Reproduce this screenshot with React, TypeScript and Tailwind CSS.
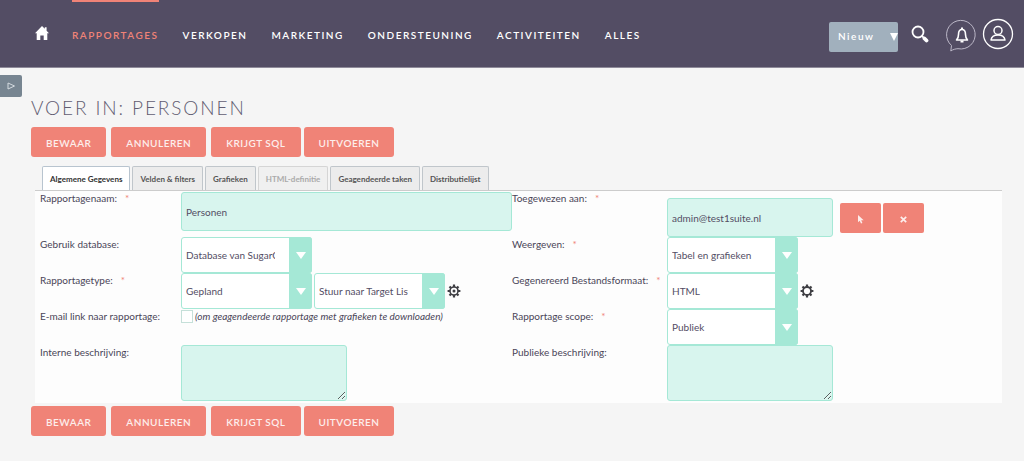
import React, { useState } from 'react';

const NAV_ITEMS = ['Rapportages', 'Verkopen', 'Marketing', 'Ondersteuning', 'Activiteiten', 'Alles'];

const TABS = [
  { label: 'Algemene Gegevens' },
  { label: 'Velden & filters' },
  { label: 'Grafieken' },
  { label: 'HTML-definitie', disabled: true },
  { label: 'Geagendeerde taken' },
  { label: 'Distributielijst' },
];

const fieldClass =
  'block rounded-[3px] border border-[#a5e8d6] bg-[#d8f5ee] px-1 text-[10px] text-[#534d64] outline-none';

const HomeIcon = () => (
  <svg viewBox="0 0 14 14" className="h-[14px] w-[14px]" fill="white">
    <path d="M7 0 0 7.200h1.700V14h3.600V9.600h3.400V14h3.600V7.200H14L11.600 4.700V1.200H9.800v1.600z" />
  </svg>
);

const SearchIcon = () => (
  <svg viewBox="0 0 18 18" className="h-[18px] w-[18px]" fill="none" stroke="white">
    <circle cx="7" cy="7" r="5.500" strokeWidth="1.800" />
    <path d="m11 11 1.600 1.600" strokeWidth="1.800" />
    <path d="m13.500 13.500 2 2" strokeWidth="3.800" strokeLinecap="round" />
  </svg>
);

const BellIcon = () => (
  <svg viewBox="0 0 32 36" className="h-[36px] w-[32px]" fill="none" stroke="white">
    <path d="M5.500 27.500A14.300 14.300 0 1 1 12 30.700c-2.500.1-4.900.7-7.200 2.300z" strokeWidth="1" stroke="#bcb8c8" />
    <path d="M10.500 22c1.700-1.600 2-3.300 2-5.500 0-3.400 1.300-5 3.500-5s3.500 1.600 3.500 5c0 2.200.3 3.900 2 5.500z" strokeWidth="1.600" strokeLinejoin="round" />
    <path d="M16 9.500v2M14.500 23.500h3" strokeWidth="2" />
  </svg>
);

const UserIcon = () => (
  <svg viewBox="0 0 32 32" className="h-[32px] w-[32px]" fill="none" stroke="white">
    <circle cx="16" cy="16" r="14.500" strokeWidth="1.300" />
    <circle cx="16" cy="12.500" r="4" strokeWidth="1.500" />
    <path d="M9 22c.5-3.500 2.800-5 7-5s6.500 1.500 7 5z" strokeWidth="1.500" strokeLinejoin="round" />
  </svg>
);

const GearIcon = ({ dot = false }: { dot?: boolean }) => (
  <svg viewBox="-7 -7 14 14" className="h-[14px] w-[14px]" fill="none" stroke="#3f3f44">
    <circle r="4" strokeWidth={dot ? 1.6 : 1.8} />
    <path
      d="M0-6.400v2.400M0 6.400v-2.400M-6.400 0h2.400M6.400 0h-2.400M-4.500-4.500l1.500 1.500M4.500 4.500 3 3M4.500-4.500 3-3M-4.500 4.500-3 3"
      strokeWidth="2.200"
    />
    {dot && <circle r="1.500" fill="#3f3f44" stroke="none" />}
  </svg>
);

const ActionButton: React.FC<{ children: React.ReactNode }> = ({ children }) => (
  <button
    type="button"
    className="h-[30px] rounded-[3px] bg-[#f08377] px-[15px] pt-[2px] text-[10px] font-semibold tracking-wider text-[#fdeeec] uppercase"
  >
    {children}
  </button>
);

const ActionButtons = () => (
  <div className="flex flex-wrap gap-[3px]">
    <div className="flex gap-[5px]">
      <ActionButton>Bewaar</ActionButton>
      <ActionButton>Annuleren</ActionButton>
      <ActionButton>Krijgt SQL</ActionButton>
    </div>
    <ActionButton>Uitvoeren</ActionButton>
  </div>
);

interface SelectFieldProps {
  id: string;
  value: string;
  label?: string;
}

const SelectField: React.FC<SelectFieldProps> = ({ id, value, label }) => (
  <div className="relative w-[131px]">
    <select
      id={id}
      aria-label={label}
      className="block h-[36px] w-full appearance-none overflow-hidden rounded-[3px] border border-[#a5e8d6] bg-white pr-[36px] pl-1 text-[10px] text-[#534d64] outline-none"
    >
      <option>{value}</option>
    </select>
    <span className="pointer-events-none absolute inset-y-0 right-0 flex w-[23px] items-center justify-center rounded-r-[3px] bg-[#a5e8d6]">
      <svg viewBox="0 0 10 7" className="h-[7px] w-[10px]" fill="white">
        <path d="M0 0h10L5 7z" />
      </svg>
    </span>
  </div>
);

interface FieldLabelProps {
  htmlFor: string;
  required?: boolean;
  children: React.ReactNode;
}

const FieldLabel: React.FC<FieldLabelProps> = ({ htmlFor, required, children }) => (
  <label htmlFor={htmlFor} className="block text-[10px] leading-[14px] text-[#4a4558]">
    {children}
    {required && <span className="ml-2 text-[#f08377]">*</span>}
  </label>
);

const App: React.FC = () => {
  const [activeTab, setActiveTab] = useState(0);
  const [name, setName] = useState('Personen');
  const [assigned, setAssigned] = useState('admin@test1suite.nl');

  return (
    <div className="min-h-screen bg-[#f5f5f5] font-['Lato',sans-serif]">
      {/* Top navigation */}
      <header className="flex h-[68px] items-center border-b border-[#8f8b9a] bg-[#534d64] pr-[10px] pl-[35px]">
        <a href="#" aria-label="Home" className="mr-[23px] pb-[2px]">
          <HomeIcon />
        </a>
        <nav className="flex h-full gap-6">
          {NAV_ITEMS.map((item, index) => (
            <a
              key={item}
              href="#"
              className={`flex h-full items-center border-t-2 pt-px text-[10px] font-semibold tracking-[0.15em] uppercase ${
                index === 0 ? 'border-[#f08377] text-[#f08377]' : 'border-transparent text-white'
              }`}
            >
              {item}
            </a>
          ))}
        </nav>
        <div className="ml-auto flex items-center">
          <button
            type="button"
            className="mt-[6px] flex h-[30px] w-[69px] items-center justify-between rounded-[2px] bg-[#a1b0bd] pl-[9px] text-[10px] font-semibold tracking-[0.15em] text-white"
          >
            Nieuw
            <svg viewBox="0 0 8 8" className="h-[8px] w-[8px]" fill="white">
              <path d="M0 0h8L4 8z" />
            </svg>
          </button>
          <button type="button" aria-label="Zoeken" className="ml-[13px]">
            <SearchIcon />
          </button>
          <button type="button" aria-label="Meldingen" className="mt-[4px] ml-[17px]">
            <BellIcon />
          </button>
          <button type="button" aria-label="Profiel" className="ml-[4px]">
            <UserIcon />
          </button>
        </div>
      </header>

      {/* Sidebar toggle */}
      <button
        type="button"
        aria-label="Zijbalk openen"
        className="mt-[7px] flex h-[22px] w-[22px] items-center justify-end rounded-r-[2px] bg-[#778591] pr-[6px]"
      >
        <svg viewBox="0 0 9 8" className="h-[8px] w-[9px]" fill="none" stroke="#d5dbe0">
          <path d="M1 1v6l6.500-3z" />
        </svg>
      </button>

      <main className="pr-[22px] pl-[31px]">
        <h1 className="mb-[8px] text-[19px] leading-[22px] font-light tracking-widest text-[#625d72] uppercase">
          Voer in: Personen
        </h1>
        <ActionButtons />

        <div className="mt-[9px] ml-[11px] flex gap-[2px]">
          {TABS.map((tab, index) => (
            <button
              key={tab.label}
              type="button"
              disabled={tab.disabled}
              onClick={() => setActiveTab(index)}
              className={`h-[24px] rounded-t-[2px] border border-b-0 px-[7px] text-[8px] font-bold ${
                index === activeTab
                  ? 'border-[#b8c4cf] bg-white text-[#333333]'
                  : tab.disabled
                    ? 'border-[#d5d5d5] bg-[#f0f0f0] text-[#aaaaaa]'
                    : 'border-[#c0c6cb] bg-[#ececec] text-[#555555]'
              }`}
            >
              {tab.label}
            </button>
          ))}
        </div>

        {/* General settings */}
        <form className="mb-[3px] ml-[4px] grid grid-cols-[141px_331px_155px_1fr] grid-rows-[46px_36px_36px_36px_58px] border-t border-[#cccccc] bg-[#fdfdfd] pl-[5px]">
          <FieldLabel htmlFor="name" required>Rapportagenaam:</FieldLabel>
          <div className="pt-px">
            <input
              id="name"
              type="text"
              value={name}
              onChange={(e) => setName(e.target.value)}
              className={`${fieldClass} h-[39px] w-full`}
            />
          </div>
          <FieldLabel htmlFor="assigned" required>Toegewezen aan:</FieldLabel>
          <div className="flex items-center pt-[7px]">
            <input
              id="assigned"
              type="text"
              value={assigned}
              onChange={(e) => setAssigned(e.target.value)}
              className={`${fieldClass} h-[39px] w-[166px]`}
            />
            <button
              type="button"
              aria-label="Selecteer gebruiker"
              className="ml-[7px] flex h-[30px] w-[41px] items-center justify-center rounded-[2px] bg-[#f08377]"
            >
              <svg viewBox="0 0 6 9" className="mt-[3px] h-[9px] w-[6px]" fill="#fdeeec">
                <path d="M0 0v7.200l1.700-1.500L3 8.500l1.400-.6-1.200-2.600H5.700z" />
              </svg>
            </button>
            <button
              type="button"
              aria-label="Wis gebruiker"
              onClick={() => setAssigned('')}
              className="ml-[2px] flex h-[30px] w-[41px] items-center justify-center rounded-[2px] bg-[#f08377]"
            >
              <svg viewBox="0 0 7 7" className="mt-[3px] h-[7px] w-[7px]" stroke="#fdeeec" strokeWidth="1.700">
                <path d="m.8.8 5.400 5.400M6.200.8.8 6.200" />
              </svg>
            </button>
          </div>

          <FieldLabel htmlFor="database">Gebruik database:</FieldLabel>
          <SelectField id="database" value="Database van SugarCRM" />
          <FieldLabel htmlFor="display" required>Weergeven:</FieldLabel>
          <SelectField id="display" value="Tabel en grafieken" />

          <FieldLabel htmlFor="type" required>Rapportagetype:</FieldLabel>
          <div className="flex items-center gap-[2px]">
            <SelectField id="type" value="Gepland" />
            <SelectField id="target" label="Actie" value="Stuur naar Target List" />
            <button type="button" aria-label="Instellingen actie">
              <GearIcon dot />
            </button>
          </div>
          <FieldLabel htmlFor="format" required>Gegenereerd Bestandsformaat:</FieldLabel>
          <div className="flex items-center gap-[2px]">
            <SelectField id="format" value="HTML" />
            <button type="button" aria-label="Instellingen formaat">
              <GearIcon />
            </button>
          </div>

          <FieldLabel htmlFor="email-link">E-mail link naar rapportage:</FieldLabel>
          <div className="flex items-start gap-[2px]">
            <input
              id="email-link"
              type="checkbox"
              className="mt-px h-[13px] w-[12px] appearance-none border border-[#c5e0d9] bg-white checked:bg-[#a5e8d6]"
            />
            <em className="text-[10px] leading-[14px] text-[#4a4558]">
              (om geagendeerde rapportage met grafieken te downloaden)
            </em>
          </div>
          <FieldLabel htmlFor="scope" required>Rapportage scope:</FieldLabel>
          <SelectField id="scope" value="Publiek" />

          <FieldLabel htmlFor="internal">Interne beschrijving:</FieldLabel>
          <textarea id="internal" className={`${fieldClass} h-[56px] w-[166px] resize`} />
          <FieldLabel htmlFor="public">Publieke beschrijving:</FieldLabel>
          <textarea id="public" className={`${fieldClass} h-[56px] w-[166px] resize`} />
        </form>

        <ActionButtons />
      </main>
    </div>
  );
};

export default App;
